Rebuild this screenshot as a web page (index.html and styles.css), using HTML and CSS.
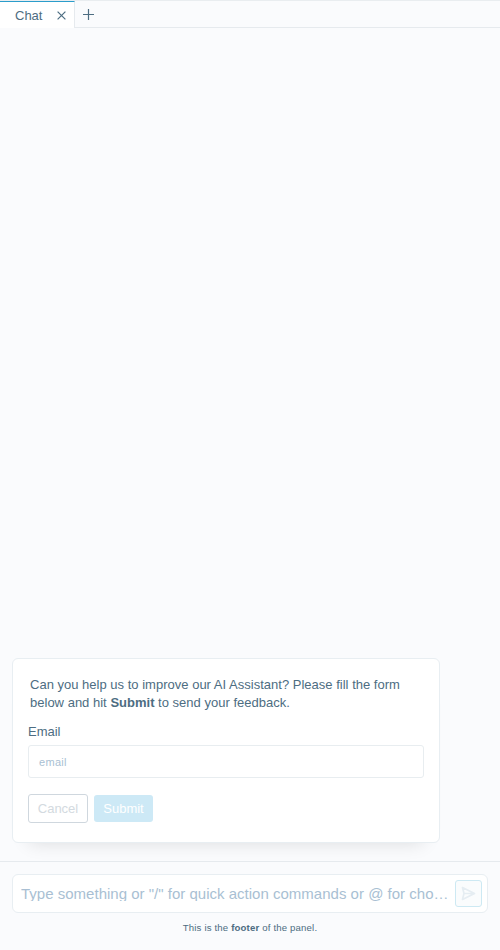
FILE: index.html
```html
<!DOCTYPE html>
<html lang="en">
<head>
<meta charset="utf-8">
<title>Chat</title>
<link rel="stylesheet" href="styles.css">
</head>
<body>
<div class="app">
  <nav class="tabs">
    <div class="tab">
      <span class="tab-label">Chat</span>
      <svg class="tab-close" width="9" height="9" viewBox="0 0 9 9"><path d="M.6.6l7.8 7.8M8.4.6L.6 8.4"/></svg>
    </div>
    <div class="tab-add">
      <svg width="11" height="11" viewBox="0 0 11 11"><path d="M5.5 0v11M0 5.5h11"/></svg>
    </div>
  </nav>
  <main class="chat">
    <section class="card">
      <p class="message">Can you help us to improve our AI Assistant? Please fill the form<br>below and hit <strong>Submit</strong> to send your feedback.</p>
      <div class="label">Email</div>
      <div class="field">email</div>
      <div class="actions">
        <div class="btn btn-cancel">Cancel</div>
        <div class="btn btn-submit">Submit</div>
      </div>
    </section>
  </main>
  <footer class="composer">
    <div class="prompt">
      <div class="prompt-text">Type something or "/" for quick action commands or @ for cho…</div>
      <div class="send">
        <svg width="15" height="15" viewBox="0 0 15 15"><path d="M1.5 1.6L13.5 7.5 1.5 13.4 3 7.5zM3 7.5h10"/></svg>
      </div>
    </div>
    <div class="info">This is the <strong>footer</strong> of the panel.</div>
  </footer>
</div>
</body>
</html>
```

FILE: styles.css
```css
* { box-sizing: border-box; }
body {
  margin: 0;
  background: #fafbfd;
  color: #4d6d82;
  font: 13px/18px "Liberation Sans", Arial, sans-serif;
}
.app { display: flex; flex-direction: column; height: 950px; overflow: hidden; }
.tabs { display: flex; height: 28px; flex: none; box-shadow: inset 0 1px #e9edf0, inset 0 -1px #e6eaee; }
svg { display: block; fill: none; stroke: #4d6d82; stroke-width: 1.2; }
.tab {
  display: flex;
  align-items: center;
  justify-content: space-between;
  width: 75px;
  margin-top: 1px;
  padding: 1px 8px 0 15px;
  background: #fff;
  border-top: 1px solid #2b9dcb;
  border-right: 1px solid #e6eaee;
}
.tab-add { padding: 9px 0 0 8px; }
.chat { flex: 1; display: flex; align-items: flex-end; padding: 0 12px 18px; }
.card {
  width: 428px;
  height: 185px;
  padding: 17px 15px 0;
  background: #fff;
  border: 1px solid #e8eef2;
  border-radius: 6px;
  box-shadow: 0 16px 18px -17px rgba(0, 0, 0, .14);
}
.message { margin: 0 0 11px 2px; letter-spacing: .01px; white-space: nowrap; }
.label { margin-bottom: 4px; }
.field {
  height: 33px;
  padding: 0 10px;
  border: 1px solid #e8edf0;
  border-radius: 3px;
  color: #a9bfd3;
  font-size: 11px;
  letter-spacing: .3px;
  line-height: 33px;
}
.actions { display: flex; align-items: center; gap: 6px; margin-top: 16px; }
.btn { border-radius: 3px; text-align: center; }
.btn-cancel { width: 60px; height: 29px; border: 1px solid #cfd7de; color: #d3dae0; line-height: 27px; }
.btn-submit { width: 59px; height: 27px; background: #cde9f6; color: #fff; line-height: 27px; }
.composer { flex: none; height: 89px; padding: 12px 12px 0; border-top: 1px solid #e6eaee; }
.prompt {
  display: flex;
  align-items: center;
  justify-content: space-between;
  height: 39px;
  padding: 0 5px 0 8px;
  background: #fff;
  border: 1px solid #e8eef2;
  border-radius: 6px;
}
.prompt-text { height: 15px; overflow: hidden; color: #a9bfd3; font-size: 15px; letter-spacing: .01px; line-height: 15px; white-space: nowrap; }
.send {
  display: grid;
  place-items: center;
  width: 27px;
  height: 27px;
  border: 1px solid #cde9f3;
  border-radius: 3px;
  background: #fafcfd;
}
.send svg { stroke: #e5edf2; stroke-width: 1.7; stroke-linejoin: round; }
.info { margin-top: 9px; font-size: 9.6px; letter-spacing: .17px; line-height: 12px; text-align: center; }
```
